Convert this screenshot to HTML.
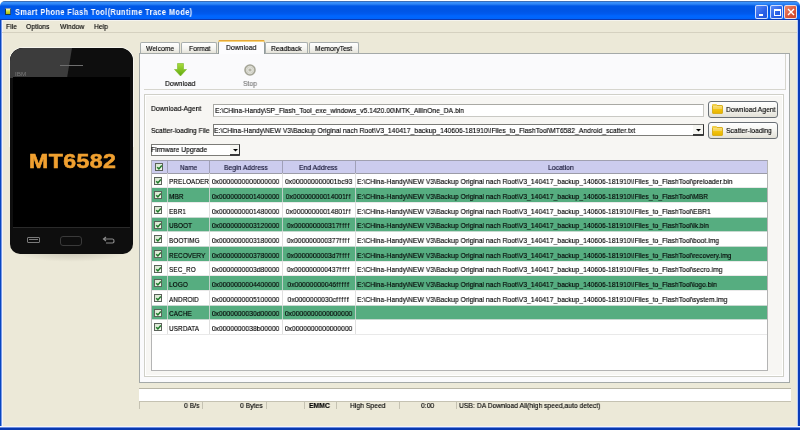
<!DOCTYPE html>
<html><head><meta charset="utf-8">
<style>
*{margin:0;padding:0;box-sizing:border-box}
html,body{width:800px;height:430px;overflow:hidden;background:#fff}
body{position:relative;font-family:"Liberation Sans",sans-serif;font-size:8px;color:#000}
.a{position:absolute}
.t{position:absolute;white-space:nowrap;will-change:transform;transform-origin:0 0;transform:scaleX(.85);line-height:10px;padding:2px 1px 3px 0;margin-top:-2px;-webkit-text-stroke:.15px currentColor}
#win{left:0;top:1px;width:800px;height:429px;background:#ECE9D8;border-radius:5px 5px 0 0}
#title{left:0;top:1px;width:800px;height:19px;border-radius:5px 5px 0 0;
 background:linear-gradient(#3C6FB8 0,#3C6FB8 1px,#3D95FF 1px,#2F86F6 3px,#0058E6 5px,#0055E5 10px,#005AEF 13px,#0066FF 15px,#0063FA 18px,#0A3BB5 18px)}
#lb{left:0;top:20px;width:3px;height:410px;background:linear-gradient(90deg,#0846C0 0,#0846C0 1px,#7A9BE8 1px,#7A9BE8 2px,#F4F4F8 2px)}
#rb{left:797px;top:20px;width:3px;height:410px;background:linear-gradient(90deg,#B8CCF8 0,#B8CCF8 1px,#0A3CB8 1px)}
#bb{left:0;top:426px;width:800px;height:4px;background:linear-gradient(#F4F4F8 0,#F4F4F8 1px,#6A8CE0 1px,#6A8CE0 2px,#0838B0 2px)}
.tbtn{top:5px;width:13px;height:14px;border:1px solid rgba(240,245,255,.85);border-radius:2px}
.tab{position:absolute;top:42px;height:11px;border:1px solid #A8AEAE;border-bottom:none;border-radius:2px 2px 0 0;background:linear-gradient(#FFFFFF,#F3F3EF 60%,#E4E2D8)}
.cb{position:absolute;width:8px;height:8px;border:1px solid #5A625A;background:linear-gradient(135deg,#D4E4CC,#F4FAF0)}

.btn{position:absolute;border:1px solid #6A7076;border-radius:3px;background:linear-gradient(#FFFFFF,#F4F4F0 50%,#E2E0D6)}
.fold{position:absolute;width:11px;height:9px;background:linear-gradient(#FBE27A 0,#F4D050 35%,#FFF0A0 40%,#F2C410 48%,#E8B400 100%);border:1px solid #D8B020;border-radius:1px}
.fold:before{content:"";position:absolute;left:-1px;top:-2px;width:5px;height:2px;background:#F0CF4A;border-radius:1px 1px 0 0}
.sf{position:absolute;top:401px;height:8px;border-top:1px solid #C5C2B2;border-left:1px solid #C5C2B2}
</style></head><body>
<div id="win" class="a"></div>
<div id="title" class="a"></div>
<div id="lb" class="a"></div><div id="rb" class="a"></div><div id="bb" class="a"></div>
<!-- title icon -->
<div class="a" style="left:5px;top:8px;width:6px;height:7px;background:linear-gradient(#F4FAD8,#D8E860 30%,#C4D428 60%,#A8BC18);border:1px solid #1E3A40;border-top-color:#8AA0C0;border-right-color:#3A5A70"></div>
<div class="t" style="left:15px;top:7px;font-size:8.5px;font-weight:bold;color:#fff;transform:scaleX(.86);letter-spacing:.5px;-webkit-text-stroke:0">Smart Phone Flash Tool(Runtime Trace Mode)</div>
<!-- title buttons -->
<div class="a tbtn" style="left:755px;background:linear-gradient(135deg,#5A8CF8,#2A5FE6 60%,#2456DC)"><div class="a" style="left:2.5px;top:7.5px;width:4.5px;height:2px;background:#fff"></div></div>
<div class="a tbtn" style="left:770px;background:linear-gradient(135deg,#5A8CF8,#2A5FE6 60%,#2456DC)"><div class="a" style="left:2.5px;top:2.5px;width:7px;height:7px;border:1px solid #fff;border-top-width:2px"></div></div>
<div class="a tbtn" style="left:784px;background:linear-gradient(135deg,#F08A6A,#D8553A 60%,#C8452A)">
<svg class="a" style="left:2px;top:2px" width="8" height="8"><path d="M1 1L7 7M7 1L1 7" stroke="#fff" stroke-width="1.4"/></svg></div>
<!-- menu -->
<div class="a" style="left:2px;top:20px;width:795px;height:1px;background:#F5F4EE"></div>
<div class="a" style="left:2px;top:32px;width:795px;height:1px;background:#D5D1C0"></div>
<div class="t" style="left:6px;top:22px">File</div>
<div class="t" style="left:26px;top:22px">Options</div>
<div class="t" style="left:60px;top:22px">Window</div>
<div class="t" style="left:94px;top:22px">Help</div>

<!-- phone -->
<div class="a" style="left:12px;top:246px;width:119px;height:16px;border-radius:50%;background:radial-gradient(ellipse at 50% 30%,rgba(120,115,100,.35),rgba(120,115,100,0) 70%)"></div>
<div class="a" style="left:9px;top:47px;width:125px;height:100px;border-radius:14px 14px 0 0;background:#F6F5EE"></div>
<div class="a" style="left:10px;top:48px;width:123px;height:206px;border-radius:13px 13px 10px 10px;background:#0E0E0E;overflow:hidden">
  <div class="a" style="left:0;top:0;width:123px;height:30px;background:#0E0E0E"></div>
  <div class="a" style="left:0;top:0;width:62px;height:30px;background:#3C3C3C;clip-path:polygon(0 0,100% 0,92% 100%,0 100%)"></div>
  <div class="a" style="left:50px;top:17px;width:23px;height:1px;background:#6E6E6E"></div>
  <div class="a" style="left:3px;top:29px;width:117px;height:151px;background:#000"></div>
  <div class="a" style="left:3px;top:179px;width:117px;height:1px;background:#2A2A2A"></div>
  <div class="a" style="left:17px;top:189px;width:13px;height:6px;border:1px solid #7A7A7A;border-radius:1px"></div>
  <div class="a" style="left:19px;top:191px;width:9px;height:1px;background:#7A7A7A"></div>
  <div class="a" style="left:50px;top:188px;width:22px;height:10px;border:1px solid #3A3A3A;border-radius:3px"></div>
  <svg class="a" style="left:92px;top:188px" width="14" height="9"><path d="M4 1L1.5 3L4 5M2 3H10.5Q12 3 12 5Q12 7 10.5 7H4" fill="none" stroke="#8A8A8A" stroke-width="1.2"/></svg>
</div>
<div class="t" style="left:15px;top:71px;font-size:6px;color:#7A7A7A;transform:scaleX(1.05);line-height:6px;-webkit-text-stroke:0">IBM</div>
<div class="t" style="left:28.5px;top:152px;font-size:21px;font-weight:bold;color:#F0A030;transform:scaleX(1.1);letter-spacing:.4px;line-height:18px;-webkit-text-stroke:.6px #F0A030">MT6582</div>

<!-- tabs -->
<div class="tab" style="left:140px;width:40px"></div>
<div class="tab" style="left:181px;width:36px"></div>
<div class="tab" style="left:265px;width:43px"></div>
<div class="tab" style="left:309px;width:50px"></div>
<!-- tab panel -->
<div class="a" style="left:139px;top:53px;width:651px;height:330px;border:1px solid #A4A9A8;background:#FAFAFC"></div>
<div class="a" style="left:218px;top:40px;width:47px;height:14px;border:1px solid #919B9C;border-bottom:none;border-radius:3px 3px 0 0;background:#FCFCFE"></div>
<div class="a" style="left:218px;top:40px;width:47px;height:2px;background:#F6D27A;border-radius:2px 2px 0 0"></div>
<div class="a" style="left:219px;top:40px;width:45px;height:1px;background:#E6A838"></div>
<div class="t" style="left:146px;top:43.5px">Welcome</div>
<div class="t" style="left:189px;top:43.5px">Format</div>
<div class="t" style="left:226px;top:42.5px">Download</div>
<div class="t" style="left:271px;top:43.5px">Readback</div>
<div class="t" style="left:315px;top:43.5px">MemoryTest</div>

<!-- toolbar -->
<svg class="a" style="left:174px;top:63px" width="13" height="14"><defs><linearGradient id="ga" x1="0" y1="0" x2="0" y2="1"><stop offset="0" stop-color="#A9DC3C"/><stop offset="1" stop-color="#5FA80E"/></linearGradient></defs><path d="M3.5 0.5H9.5V6.5H12.5L6.5 13L0.5 6.5H3.5Z" fill="url(#ga)" stroke="#78B828" stroke-width=".6"/></svg>
<div class="t" style="left:165px;top:79px">Download</div>
<svg class="a" style="left:244px;top:64px" width="12" height="12"><circle cx="6" cy="6" r="5" fill="#E2E2DA" stroke="#A4A496" stroke-width="1.6"/><circle cx="6" cy="6" r="3.2" fill="#ECECE6" stroke="#C4C4B8" stroke-width=".8"/><rect x="4.5" y="4.6" width="3" height="2.8" fill="#B4B4A6"/></svg>
<div class="t" style="left:243px;top:78.5px;color:#7A7A7A">Stop</div>
<div class="a" style="left:144px;top:89px;width:642px;height:1px;background:#D6D5CE"></div>
<div class="a" style="left:785px;top:54px;width:1px;height:36px;background:#D6D5CE"></div>

<!-- group -->
<div class="a" style="left:144px;top:94px;width:640px;height:283px;border:1px solid #D0D0C8;background:#F7F6F3"></div>
<div class="a" style="left:145px;top:95px;width:638px;height:281px;border:1px solid #FFFFFF"></div>
<div class="t" style="left:151px;top:104px">Download-Agent</div>
<div class="a" style="left:213px;top:104px;width:491px;height:13px;border:1px solid #A9A9A4;border-right-color:#C9C9C4;border-bottom-color:#C9C9C4;background:#fff"></div>
<div class="t" style="left:215px;top:106px">E:\CHina-Handy\SP_Flash_Tool_exe_windows_v5.1420.00\MTK_AllInOne_DA.bin</div>
<div class="t" style="left:151px;top:126px">Scatter-loading File</div>
<div class="a" style="left:213px;top:124px;width:491px;height:12px;border:1px solid #7C7C78;border-right-color:#303030;background:#fff"></div>
<div class="t" style="left:214px;top:125.5px">E:\CHina-Handy\NEW V3\Backup Original nach Root\V3_140417_backup_140606-181910\!Files_to_FlashTool\MT6582_Android_scatter.txt</div>
<div class="a" style="left:693px;top:125px;width:10px;height:11px;background:#F6F6F2;border-bottom:2px solid #3A3A3A"></div>
<svg class="a" style="left:695.5px;top:128.8px" width="6" height="4"><path d="M0 0H5L2.5 2.6Z" fill="#000"/></svg>
<div class="btn" style="left:708px;top:101px;width:70px;height:17px"></div>
<div class="fold" style="left:712px;top:105px"></div>
<div class="t" style="left:725.5px;top:104.7px">Download Agent</div>
<div class="btn" style="left:708px;top:122px;width:70px;height:17px"></div>
<div class="fold" style="left:712px;top:127px"></div>
<div class="t" style="left:725.5px;top:126.3px">Scatter-loading</div>

<div class="a" style="left:151px;top:144px;width:89px;height:12px;border:1px solid #7C7C78;border-right-color:#303030;background:#fff"></div>
<div class="t" style="left:151px;top:145px">Firmware Upgrade</div>
<div class="a" style="left:230px;top:145px;width:9px;height:11px;background:#F6F6F2;border-bottom:2px solid #3A3A3A"></div>
<svg class="a" style="left:232.5px;top:148.8px" width="6" height="4"><path d="M0 0H5L2.5 2.6Z" fill="#000"/></svg>

<!-- table -->
<div class="a" style="left:151px;top:160px;width:617px;height:211px;border:1px solid #B4B4B4;border-top-color:#A0A0B0;background:#FFFFFF"></div>
<div class="a" style="left:152px;top:161px;width:615px;height:12px;background:#CCCCEE"></div>
<div class="a" style="left:152px;top:173px;width:615px;height:1px;background:#9C9CA8"></div>
<div class="a" style="left:167px;top:161px;width:1px;height:12px;background:#A0A0B8"></div>
<div class="a" style="left:209px;top:161px;width:1px;height:12px;background:#A0A0B8"></div>
<div class="a" style="left:282px;top:161px;width:1px;height:12px;background:#A0A0B8"></div>
<div class="a" style="left:355px;top:161px;width:1px;height:12px;background:#A0A0B8"></div>
<div class="cb" style="left:155px;top:163px"><svg class="a" style="left:0;top:0" width="7" height="7"><path d="M1.2 3.2L2.9 4.9L5.8 1.6" fill="none" stroke="#1F7A2A" stroke-width="1.5"/></svg></div>
<div class="t" style="left:179.5px;top:163px;color:#101030;transform:scaleX(.8)">Name</div>
<div class="t" style="left:224px;top:163px;color:#101030">Begin Address</div>
<div class="t" style="left:299px;top:163px;color:#101030">End Address</div>
<div class="t" style="left:548px;top:163px;color:#101030">Location</div>
<div class="a" style="left:152px;top:187.67px;width:615px;height:14.67px;background:#56AD80"></div>
<div class="a" style="left:152px;top:217.01px;width:615px;height:14.67px;background:#56AD80"></div>
<div class="a" style="left:152px;top:246.35px;width:615px;height:14.67px;background:#56AD80"></div>
<div class="a" style="left:152px;top:275.69px;width:615px;height:14.67px;background:#56AD80"></div>
<div class="a" style="left:152px;top:305.03px;width:615px;height:14.67px;background:#56AD80"></div>
<div class="a" style="left:167px;top:173px;width:1px;height:161.37px;background:#D8D8D8;opacity:.8"></div>
<div class="a" style="left:209px;top:173px;width:1px;height:161.37px;background:#D8D8D8;opacity:.8"></div>
<div class="a" style="left:282px;top:173px;width:1px;height:161.37px;background:#D8D8D8;opacity:.8"></div>
<div class="a" style="left:355px;top:173px;width:1px;height:161.37px;background:#D8D8D8;opacity:.8"></div>
<div class="a" style="left:152px;top:187.17px;width:615px;height:1px;background:#E4E4E4;opacity:.8"></div>
<div class="a" style="left:152px;top:201.84px;width:615px;height:1px;background:#E4E4E4;opacity:.8"></div>
<div class="a" style="left:152px;top:216.51px;width:615px;height:1px;background:#E4E4E4;opacity:.8"></div>
<div class="a" style="left:152px;top:231.18px;width:615px;height:1px;background:#E4E4E4;opacity:.8"></div>
<div class="a" style="left:152px;top:245.85px;width:615px;height:1px;background:#E4E4E4;opacity:.8"></div>
<div class="a" style="left:152px;top:260.52px;width:615px;height:1px;background:#E4E4E4;opacity:.8"></div>
<div class="a" style="left:152px;top:275.19px;width:615px;height:1px;background:#E4E4E4;opacity:.8"></div>
<div class="a" style="left:152px;top:289.86px;width:615px;height:1px;background:#E4E4E4;opacity:.8"></div>
<div class="a" style="left:152px;top:304.53px;width:615px;height:1px;background:#E4E4E4;opacity:.8"></div>
<div class="a" style="left:152px;top:319.20px;width:615px;height:1px;background:#E4E4E4;opacity:.8"></div>
<div class="a" style="left:152px;top:333.87px;width:615px;height:1px;background:#E4E4E4;opacity:.8"></div>
<div class="cb" style="left:154px;top:176.50px"><svg class="a" style="left:0;top:0" width="7" height="7"><path d="M1.2 3.2L2.9 4.9L5.8 1.6" fill="none" stroke="#1F7A2A" stroke-width="1.5"/></svg></div>
<div class="t" style="left:169px;top:177.20px;transform:scaleX(.81)">PRELOADER</div>
<div class="t" style="left:196px;width:100px;text-align:center;transform-origin:50% 0;top:177.20px">0x0000000000000000</div>
<div class="t" style="left:269px;width:100px;text-align:center;transform-origin:50% 0;top:177.20px">0x000000000001bc93</div>
<div class="t" style="left:357px;top:177.20px">E:\CHina-Handy\NEW V3\Backup Original nach Root\V3_140417_backup_140606-181910\!Files_to_FlashTool\preloader.bin</div>
<div class="cb" style="left:154px;top:191.17px"><svg class="a" style="left:0;top:0" width="7" height="7"><path d="M1.2 3.2L2.9 4.9L5.8 1.6" fill="none" stroke="#1F7A2A" stroke-width="1.5"/></svg></div>
<div class="t" style="left:169px;top:191.87px;transform:scaleX(.81)">MBR</div>
<div class="t" style="left:196px;width:100px;text-align:center;transform-origin:50% 0;top:191.87px">0x0000000001400000</div>
<div class="t" style="left:269px;width:100px;text-align:center;transform-origin:50% 0;top:191.87px">0x00000000014001<span style="letter-spacing:1.1px">f</span><span style="letter-spacing:1.1px">f</span></div>
<div class="t" style="left:357px;top:191.87px">E:\CHina-Handy\NEW V3\Backup Original nach Root\V3_140417_backup_140606-181910\!Files_to_FlashTool\MBR</div>
<div class="cb" style="left:154px;top:205.84px"><svg class="a" style="left:0;top:0" width="7" height="7"><path d="M1.2 3.2L2.9 4.9L5.8 1.6" fill="none" stroke="#1F7A2A" stroke-width="1.5"/></svg></div>
<div class="t" style="left:169px;top:206.54px;transform:scaleX(.81)">EBR1</div>
<div class="t" style="left:196px;width:100px;text-align:center;transform-origin:50% 0;top:206.54px">0x0000000001480000</div>
<div class="t" style="left:269px;width:100px;text-align:center;transform-origin:50% 0;top:206.54px">0x00000000014801<span style="letter-spacing:1.1px">f</span><span style="letter-spacing:1.1px">f</span></div>
<div class="t" style="left:357px;top:206.54px">E:\CHina-Handy\NEW V3\Backup Original nach Root\V3_140417_backup_140606-181910\!Files_to_FlashTool\EBR1</div>
<div class="cb" style="left:154px;top:220.51px"><svg class="a" style="left:0;top:0" width="7" height="7"><path d="M1.2 3.2L2.9 4.9L5.8 1.6" fill="none" stroke="#1F7A2A" stroke-width="1.5"/></svg></div>
<div class="t" style="left:169px;top:221.21px;transform:scaleX(.81)">UBOOT</div>
<div class="t" style="left:196px;width:100px;text-align:center;transform-origin:50% 0;top:221.21px">0x0000000003120000</div>
<div class="t" style="left:269px;width:100px;text-align:center;transform-origin:50% 0;top:221.21px">0x000000000317<span style="letter-spacing:1.1px">f</span><span style="letter-spacing:1.1px">f</span><span style="letter-spacing:1.1px">f</span><span style="letter-spacing:1.1px">f</span></div>
<div class="t" style="left:357px;top:221.21px">E:\CHina-Handy\NEW V3\Backup Original nach Root\V3_140417_backup_140606-181910\!Files_to_FlashTool\lk.bin</div>
<div class="cb" style="left:154px;top:235.18px"><svg class="a" style="left:0;top:0" width="7" height="7"><path d="M1.2 3.2L2.9 4.9L5.8 1.6" fill="none" stroke="#1F7A2A" stroke-width="1.5"/></svg></div>
<div class="t" style="left:169px;top:235.88px;transform:scaleX(.81)">BOOTIMG</div>
<div class="t" style="left:196px;width:100px;text-align:center;transform-origin:50% 0;top:235.88px">0x0000000003180000</div>
<div class="t" style="left:269px;width:100px;text-align:center;transform-origin:50% 0;top:235.88px">0x000000000377<span style="letter-spacing:1.1px">f</span><span style="letter-spacing:1.1px">f</span><span style="letter-spacing:1.1px">f</span><span style="letter-spacing:1.1px">f</span></div>
<div class="t" style="left:357px;top:235.88px">E:\CHina-Handy\NEW V3\Backup Original nach Root\V3_140417_backup_140606-181910\!Files_to_FlashTool\boot.img</div>
<div class="cb" style="left:154px;top:249.85px"><svg class="a" style="left:0;top:0" width="7" height="7"><path d="M1.2 3.2L2.9 4.9L5.8 1.6" fill="none" stroke="#1F7A2A" stroke-width="1.5"/></svg></div>
<div class="t" style="left:169px;top:250.55px;transform:scaleX(.81)">RECOVERY</div>
<div class="t" style="left:196px;width:100px;text-align:center;transform-origin:50% 0;top:250.55px">0x0000000003780000</div>
<div class="t" style="left:269px;width:100px;text-align:center;transform-origin:50% 0;top:250.55px">0x0000000003d7<span style="letter-spacing:1.1px">f</span><span style="letter-spacing:1.1px">f</span><span style="letter-spacing:1.1px">f</span><span style="letter-spacing:1.1px">f</span></div>
<div class="t" style="left:357px;top:250.55px">E:\CHina-Handy\NEW V3\Backup Original nach Root\V3_140417_backup_140606-181910\!Files_to_FlashTool\recovery.img</div>
<div class="cb" style="left:154px;top:264.52px"><svg class="a" style="left:0;top:0" width="7" height="7"><path d="M1.2 3.2L2.9 4.9L5.8 1.6" fill="none" stroke="#1F7A2A" stroke-width="1.5"/></svg></div>
<div class="t" style="left:169px;top:265.22px;transform:scaleX(.81)">SEC_RO</div>
<div class="t" style="left:196px;width:100px;text-align:center;transform-origin:50% 0;top:265.22px">0x0000000003d80000</div>
<div class="t" style="left:269px;width:100px;text-align:center;transform-origin:50% 0;top:265.22px">0x000000000437<span style="letter-spacing:1.1px">f</span><span style="letter-spacing:1.1px">f</span><span style="letter-spacing:1.1px">f</span><span style="letter-spacing:1.1px">f</span></div>
<div class="t" style="left:357px;top:265.22px">E:\CHina-Handy\NEW V3\Backup Original nach Root\V3_140417_backup_140606-181910\!Files_to_FlashTool\secro.img</div>
<div class="cb" style="left:154px;top:279.19px"><svg class="a" style="left:0;top:0" width="7" height="7"><path d="M1.2 3.2L2.9 4.9L5.8 1.6" fill="none" stroke="#1F7A2A" stroke-width="1.5"/></svg></div>
<div class="t" style="left:169px;top:279.89px;transform:scaleX(.81)">LOGO</div>
<div class="t" style="left:196px;width:100px;text-align:center;transform-origin:50% 0;top:279.89px">0x0000000004400000</div>
<div class="t" style="left:269px;width:100px;text-align:center;transform-origin:50% 0;top:279.89px">0x00000000046<span style="letter-spacing:1.1px">f</span><span style="letter-spacing:1.1px">f</span><span style="letter-spacing:1.1px">f</span><span style="letter-spacing:1.1px">f</span><span style="letter-spacing:1.1px">f</span></div>
<div class="t" style="left:357px;top:279.89px">E:\CHina-Handy\NEW V3\Backup Original nach Root\V3_140417_backup_140606-181910\!Files_to_FlashTool\logo.bin</div>
<div class="cb" style="left:154px;top:293.86px"><svg class="a" style="left:0;top:0" width="7" height="7"><path d="M1.2 3.2L2.9 4.9L5.8 1.6" fill="none" stroke="#1F7A2A" stroke-width="1.5"/></svg></div>
<div class="t" style="left:169px;top:294.56px;transform:scaleX(.81)">ANDROID</div>
<div class="t" style="left:196px;width:100px;text-align:center;transform-origin:50% 0;top:294.56px">0x0000000005100000</div>
<div class="t" style="left:269px;width:100px;text-align:center;transform-origin:50% 0;top:294.56px">0x0000000030c<span style="letter-spacing:1.1px">f</span><span style="letter-spacing:1.1px">f</span><span style="letter-spacing:1.1px">f</span><span style="letter-spacing:1.1px">f</span><span style="letter-spacing:1.1px">f</span></div>
<div class="t" style="left:357px;top:294.56px">E:\CHina-Handy\NEW V3\Backup Original nach Root\V3_140417_backup_140606-181910\!Files_to_FlashTool\system.img</div>
<div class="cb" style="left:154px;top:308.53px"><svg class="a" style="left:0;top:0" width="7" height="7"><path d="M1.2 3.2L2.9 4.9L5.8 1.6" fill="none" stroke="#1F7A2A" stroke-width="1.5"/></svg></div>
<div class="t" style="left:169px;top:309.23px;transform:scaleX(.81)">CACHE</div>
<div class="t" style="left:196px;width:100px;text-align:center;transform-origin:50% 0;top:309.23px">0x0000000030d00000</div>
<div class="t" style="left:269px;width:100px;text-align:center;transform-origin:50% 0;top:309.23px">0x0000000000000000</div>
<div class="cb" style="left:154px;top:323.20px"><svg class="a" style="left:0;top:0" width="7" height="7"><path d="M1.2 3.2L2.9 4.9L5.8 1.6" fill="none" stroke="#1F7A2A" stroke-width="1.5"/></svg></div>
<div class="t" style="left:169px;top:323.90px;transform:scaleX(.81)">USRDATA</div>
<div class="t" style="left:196px;width:100px;text-align:center;transform-origin:50% 0;top:323.90px">0x0000000038b00000</div>
<div class="t" style="left:269px;width:100px;text-align:center;transform-origin:50% 0;top:323.90px">0x0000000000000000</div>

<!-- progress & status -->
<div class="a" style="left:139px;top:388px;width:652px;height:13px;border-top:1px solid #B8B5A6;background:#FFFFFF"></div>
<div class="sf" style="left:139px;width:63px"></div>
<div class="sf" style="left:202px;width:64px"></div>
<div class="sf" style="left:266px;width:38px"></div>
<div class="sf" style="left:304px;width:32px"></div>
<div class="sf" style="left:336px;width:63px"></div>
<div class="sf" style="left:399px;width:57px"></div>
<div class="sf" style="left:456px;width:335px"></div>
<div class="t" style="left:184px;top:400.8px">0 B/s</div>
<div class="t" style="left:240px;top:400.8px">0 Bytes</div>
<div class="t" style="left:309px;top:400.8px;font-weight:bold;transform:scaleX(.85)">EMMC</div>
<div class="t" style="left:350px;top:400.8px">High Speed</div>
<div class="t" style="left:421px;top:400.8px">0:00</div>
<div class="t" style="left:459px;top:400.8px">USB: DA Download All(high speed,auto detect)</div>
</body></html>
